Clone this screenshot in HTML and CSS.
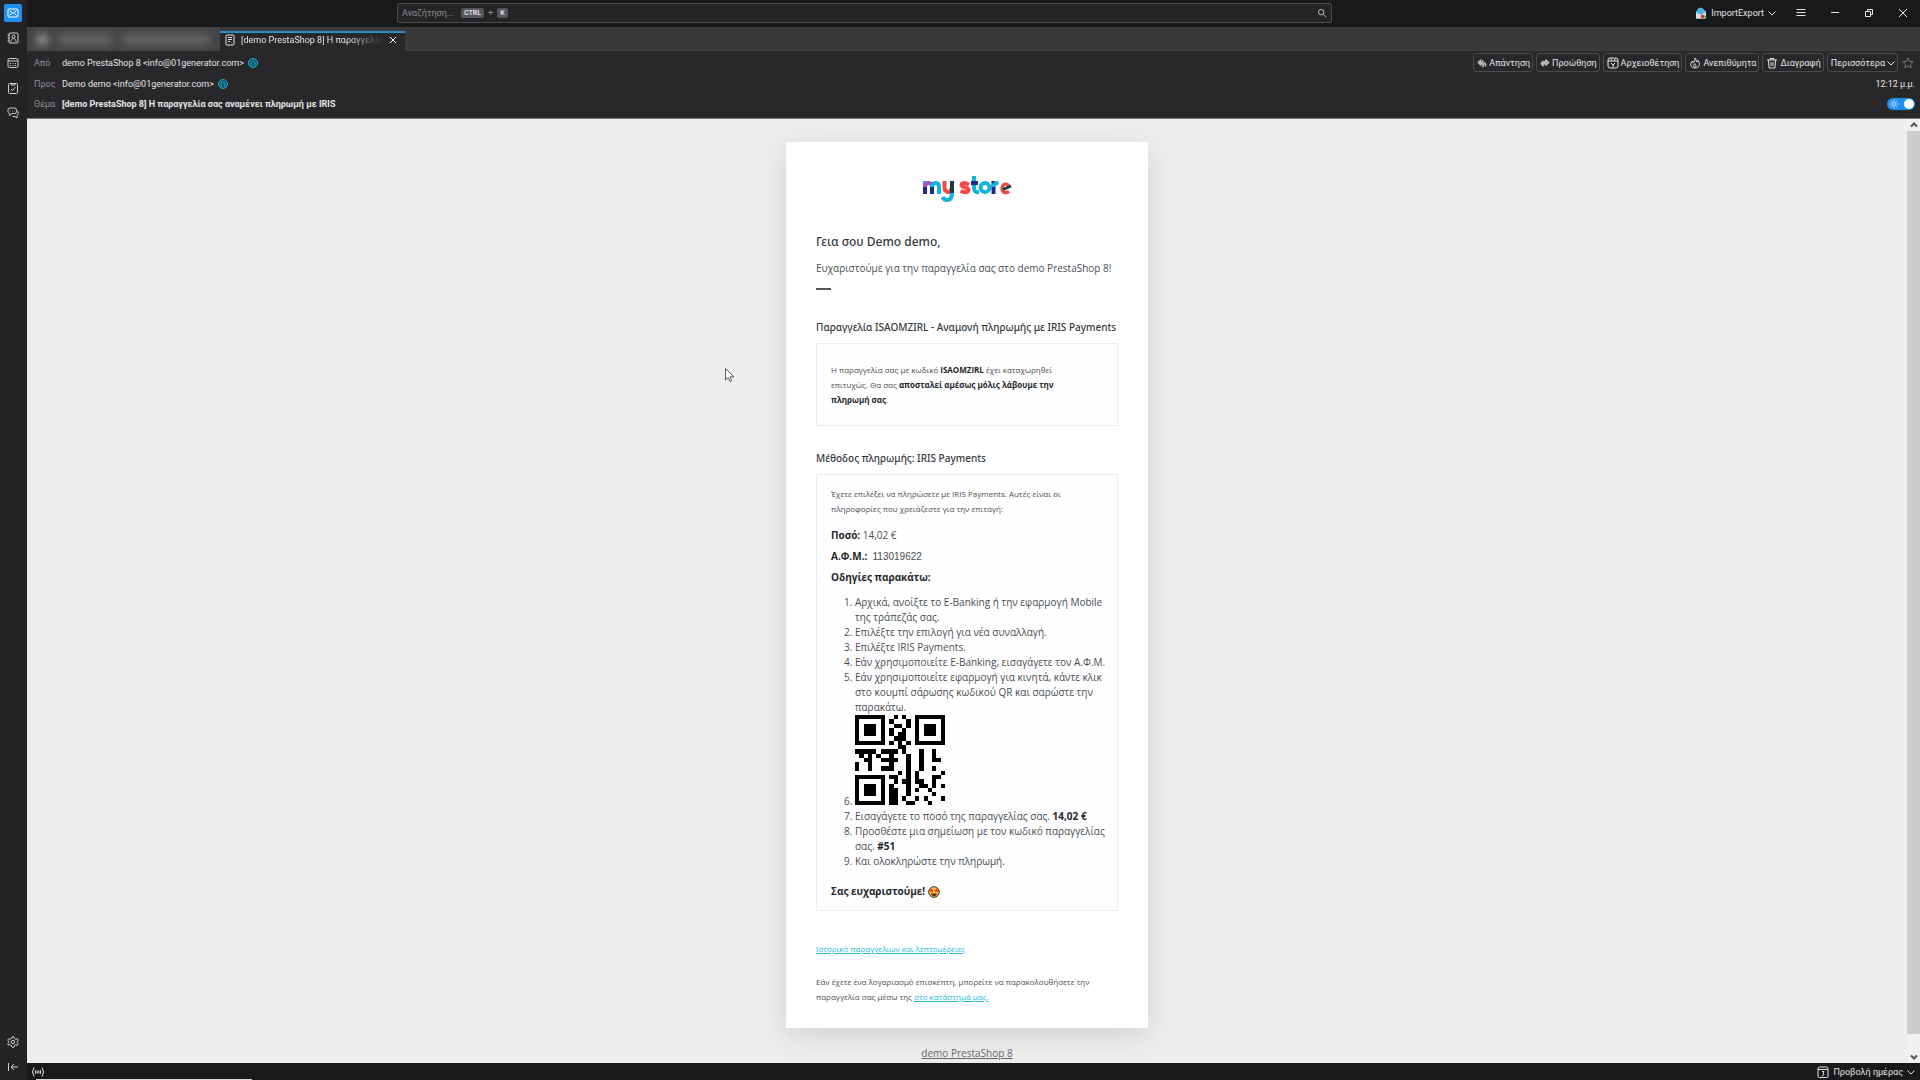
FILE: index.html
```html
<!DOCTYPE html>
<html lang="el">
<head>
<meta charset="utf-8">
<title>[demo PrestaShop 8] Η παραγγελία σας αναμένει πληρωμή με IRIS</title>
<link rel="stylesheet" href="styles.css">
</head>
<body>
<div class="app">
  <nav class="spaces" aria-label="Χώροι">
    <button class="space active" aria-label="Αλληλογραφία"><svg viewBox="0 0 12 12"><rect x="1" y="2" width="10" height="8" rx="1"/><path d="M2.500 3.500 6 6.500l3.500-3M2.500 8.500l2-2M9.500 8.500l-2-2"/></svg></button>
    <button class="space" aria-label="Επαφές"><svg viewBox="0 0 12 12"><rect x="2" y="1" width="9" height="10" rx="1"/><circle cx="6.500" cy="4.500" r="1.500"/><path d="M4 9.500c0-4 5-4 5 0M.500 3h2M.500 6h2M.500 9h2"/></svg></button>
    <button class="space" aria-label="Ημερολόγιο"><svg viewBox="0 0 12 12"><rect x="1" y="1.500" width="10" height="9" rx="1.500"/><path d="M1 4h10M3 6.500h1M5.500 6.500h1M8 6.500h1M3 8.500h1M5.500 8.500h1M8 8.500h1"/></svg></button>
    <button class="space" aria-label="Εργασίες"><svg viewBox="0 0 12 12"><rect x="1.500" y="1.500" width="9" height="10" rx="1"/><path d="M4 1.500h4v1.500H4zM4 7l1.500 1.500L8.500 5"/></svg></button>
    <button class="space" aria-label="Συνομιλία"><svg viewBox="0 0 12 12"><path d="M3 1h4.500a2 2 0 0 1 2 2v1.500a2 2 0 0 1-2 2H5L2.500 8.500v-2A2 2 0 0 1 1 4.500V3a2 2 0 0 1 2-2zM10.500 4c1 1 1 3.500-.500 4.500V11L8 9.500H5.500M3 4h.5M5 4h.5M7 4h.5"/></svg></button>
    <span class="spacer"></span>
    <button class="space" aria-label="Ρυθμίσεις"><svg viewBox="0 0 12 12"><path d="M5 .8h2l.4 1.700 1.200.7 1.700-.5 1 1.700L10 5.600v.8l1.300 1.200-1 1.700-1.700-.5-1.200.7L7 11.200H5l-.4-1.700-1.200-.7-1.700.5-1-1.700L2 6.400v-.8L.7 4.400l1-1.700 1.700.5 1.200-.7z"/><circle cx="6" cy="6" r="1.700"/></svg></button>
    <button class="space" aria-label="Σύμπτυξη"><svg viewBox="0 0 12 12"><path d="M1.500 2v8M11 6H4M7 3 4 6l3 3"/></svg></button>
  </nav>

  <header class="titlebar">
    <span></span>
    <label class="search">
      <input type="text" aria-label="Αναζήτηση" placeholder="Αναζήτηση...">
      <kbd>CTRL</kbd><span>+</span><kbd>K</kbd>
      <svg class="ico lens" viewBox="0 0 12 12"><circle cx="5" cy="5" r="3.300"/><path d="M7.500 7.500 11 11"/></svg>
    </label>
    <div class="window">
      <button class="addon">
        <svg viewBox="0 0 12 12"><path d="M1 4.500 6 .5l5 4v7H1z" fill="#9fb4c6"/><circle cx="5.500" cy="4" r="3.200" fill="#3cb6e8"/><path d="M1 5.500 6 8l5-2.500v6H1z" fill="#d9e2ea"/><circle cx="7.500" cy="9.500" r="1.800" fill="#d8272c"/><path d="M9 8l3 2-2 2z" fill="#2f9e57"/></svg>
        ImportExport
        <svg class="ico chev" viewBox="0 0 8 8"><path d="M.5 2.500 4 6l3.500-3.500"/></svg>
      </button>
      <button class="win" aria-label="Μενού"><svg class="ico" viewBox="0 0 10 10"><path d="M.5 1.500h9M.5 4.500h9M.5 7.500h9"/></svg></button>
      <button class="win" aria-label="Ελαχιστοποίηση"><svg class="ico" viewBox="0 0 10 10"><path d="M1 4.500h8"/></svg></button>
      <button class="win" aria-label="Επαναφορά"><svg class="ico" viewBox="0 0 10 10"><path d="M1.500 3.500h5v5h-5zM3.500 3.500v-2h5v5h-2"/></svg></button>
      <button class="win" aria-label="Κλείσιμο"><svg class="ico" viewBox="0 0 10 10"><path d="m1 1 8 8M9 1 1 9"/></svg></button>
    </div>
  </header>

  <div class="tabs">
    <button class="tab hidden-tab" aria-label="Εισερχόμενα"><i class="dot"></i><i class="bar"></i><i class="bar wide"></i></button>
    <div class="tab current">
      <svg class="ico" viewBox="0 0 10 12"><rect x="1" y="1" width="8" height="10" rx="1"/><path d="M3 3.500h4M3 5.500h4M3 7.500h2M6.500 8.500h.5"/></svg>
      <span class="tab-title">[demo PrestaShop 8] Η παραγγελία σας</span>
      <button class="close" aria-label="Κλείσιμο καρτέλας"><svg class="ico" viewBox="0 0 8 8"><path d="m1 1 6 6M7 1 1 7"/></svg></button>
    </div>
  </div>

  <section class="headers">
    <div class="row">
      <span class="name">Από</span><span>demo PrestaShop 8 &lt;info@01generator.com&gt;</span>
      <svg class="person" viewBox="0 0 10 10"><circle cx="5" cy="5" r="4.500"/><path d="M3 8.500c1-1 .5-1.500 0-2.500-.5-4 4.500-4 4 0-.5 1-1 1.500 0 2.500"/></svg>
      <div class="actions">
        <button><svg class="ico glyph" viewBox="0 0 12 12"><path d="M4.500 2 1 5.500 4.500 9V7c2.500 0 3 1.500 2.500 4 2-3 1-5.500-2.500-6z"/><path d="M7 2.500 6 3.500 8 5c3 1 3 3 2 5.500"/></svg>Απάντηση</button>
        <button><svg class="ico glyph" viewBox="0 0 12 12"><path d="M7 2 11 5.500 7 9V7C4.500 7 4 8 3.500 10 .5 6.500 3.500 4 7 4z"/><path d="M4 3.500C2 4 1 6 1.500 8"/></svg>Προώθηση</button>
        <button><svg class="ico" viewBox="0 0 12 12"><rect x="1" y="1" width="10" height="10" rx="2"/><path d="M1 4h10M4 1.500 4.500 4M8 1.500 7.500 4M4 6l2 2 2-2M6 8v2.500"/></svg>Αρχειοθέτηση</button>
        <button><svg class="ico" viewBox="0 0 12 12"><path d="M6 1c2 2 .5 3 2 4l1-1.500c3 4 1 7.500-3 7.500s-6-3.500-2.500-7l.5 2C5.500 5 6 3 6 1zM6 10.500c-2-1-1.500-3 0-4 0 1.500 2.500 2.500 0 4z"/></svg>Ανεπιθύμητα</button>
        <button><svg class="ico" viewBox="0 0 12 12"><path d="M1 3h10M4 3V1.500h4V3M2.500 3 3 11h6l.5-8M5 5v4M7 5v4"/></svg>Διαγραφή</button>
        <button>Περισσότερα<svg class="ico chev" viewBox="0 0 8 8"><path d="M.5 2.500 4 6l3.500-3.500"/></svg></button>
        <button class="star" aria-label="Αστέρι"><svg class="ico" viewBox="0 0 12 12"><path d="m6 1 1.500 3.300 3.600.4-2.700 2.400.8 3.600L6 8.900l-3.200 1.800.8-3.600L.9 4.700l3.600-.4z"/></svg></button>
      </div>
    </div>
    <div class="row">
      <span class="name">Προς</span><span>Demo demo &lt;info@01generator.com&gt;</span>
      <svg class="person" viewBox="0 0 10 10"><circle cx="5" cy="5" r="4.500"/><path d="M3 8.500c1-1 .5-1.500 0-2.500-.5-4 4.500-4 4 0-.5 1-1 1.500 0 2.500"/></svg>
      <time class="end">12:12 μ.μ.</time>
    </div>
    <div class="row">
      <span class="name">Θέμα</span><strong>[demo PrestaShop 8] Η παραγγελία σας αναμένει πληρωμή με IRIS</strong>
      <label class="switch end"><input type="checkbox" checked aria-label="Φωτεινή εμφάνιση"><svg viewBox="0 0 10 10"><circle cx="5" cy="5" r="1.800"/><path d="M5 .5v2M5 7.500v2M.5 5h2M7.500 5h2M1.800 1.800l1.400 1.400M6.800 6.800l1.400 1.400M8.200 1.800 6.800 3.200M3.200 6.800 1.800 8.200"/></svg></label>
    </div>
  </section>

  <main class="message">
    <div class="body">
      <article class="card">
        <svg class="logo" viewBox="0 0 90 28" role="img" aria-label="my store" fill="none" stroke-width="4" stroke-linecap="butt">
          <path d="M3 8v11M3 19v-6" stroke="#1e2a8a"/><path d="M3 11V6" stroke="#12b3dd"/>
          <path d="M3 12q0-4 3.500-4 3 0 3.500 3" stroke="#b04fb5"/><path d="M10 19v-7" stroke="#1e2a8a"/><path d="M10 12q0-4 3.500-4t3.500 4v7" stroke="#12b3dd"/>
          <path d="M22.500 6v6q0 5 4 5 3 0 3-4" stroke="#f0484b"/><path d="M30 6v12" stroke="#14413f"/><path d="M30 18q0 7-5 7-3 0-4.500-3" stroke="#12b3dd"/>
          <path d="M47 9.500q-7-3-7.500.5c0 3 7 2 7 5q-1 4-8 1" stroke="#f0484b"/>
          <path d="M52 1v12q0 5 5 4" stroke="#12b3dd"/><path d="M49 8h7" stroke="#1e2a8a"/>
          <circle cx="63" cy="12.500" r="4.500" stroke="#12b3dd"/>
          <path d="M71.500 6v13" stroke="#1e2a8a"/><path d="M71.500 12q0-4 5-4" stroke="#12b3dd"/>
          <path d="M87 16.500q-3 2-5.500.500-2.500-3-.5-6.500 3-3 6 .5" stroke="#f0484b" stroke-width="3.500"/><path d="m81 14.500 8-3.500" stroke="#14413f" stroke-width="3"/>
        </svg>
        <h1>Γεια σου Demo demo,</h1>
        <p class="lead">Ευχαριστούμε για την παραγγελία σας στο demo PrestaShop 8!</p>
        <hr class="dash">
        <h2>Παραγγελία ISAOMZIRL - Αναμονή πληρωμής με IRIS Payments</h2>
        <div class="box order">
          <p>Η παραγγελία σας με κωδικό <b>ISAOMZIRL</b> έχει καταχωρηθεί επιτυχώς. Θα σας <b>αποσταλεί αμέσως μόλις λάβουμε την πληρωμή σας</b>.</p>
        </div>
        <h2>Μέθοδος πληρωμής: IRIS Payments</h2>
        <div class="box payment">
          <p class="intro">Έχετε επιλέξει να πληρώσετε με IRIS Payments. Αυτές είναι οι πληροφορίες που χρειάζεστε για την επιταγή:</p>
          <p class="fact"><b>Ποσό:</b> 14,02 €</p>
          <p class="fact"><b>Α.Φ.Μ.:</b>&nbsp; <span class="vat">113019622</span></p>
          <p class="fact"><b>Οδηγίες παρακάτω:</b></p>
          <ol>
            <li>Αρχικά, ανοίξτε το E-Banking ή την εφαρμογή Mobile της τράπεζάς σας.</li>
            <li>Επιλέξτε την επιλογή για νέα συναλλαγή.</li>
            <li>Επιλέξτε IRIS Payments.</li>
            <li>Εάν χρησιμοποιείτε E-Banking, εισαγάγετε τον Α.Φ.Μ.</li>
            <li>Εάν χρησιμοποιείτε εφαρμογή για κινητά, κάντε κλικ στο κουμπί σάρωσης κωδικού QR και σαρώστε την παρακάτω.</li>
            <li><svg class="qr" viewBox="0 0 21 21" role="img" aria-label="Κωδικός QR">
              <path d="M0 0h7v7H0zM1 1v5h5V1zM14 0h7v7h-7zM15 1v5h5V1zM0 14h7v7H0zM1 15v5h5v-5zM2 2h3v3H2zM16 2h3v3h-3zM2 16h3v3H2z" fill-rule="evenodd"/>
              <path class="cells" d="M9 .5h1m1 0h1M8 1.500h1m3 0h1M9 2.500h2m1 0h1M8 3.500h1m2 0h1M8 4.500h1m1 0h2M9 5.500h3M8 6.500h1m1 0h1m1 0h1M10 7.500h2M0 8.500h5m1 0h4m1 0h1m3 0h1m2 0h1M1 9.500h1m1 0h1m1 0h1m2 0h1m3 0h1m2 0h1m2 0h1M2 10.500h2m2 0h4m2 0h1m2 0h1m2 0h2M0 11.500h1m2 0h1m4 0h1m3 0h1m2 0h1M0 12.500h1m2 0h1m2 0h3m3 0h1m2 0h1m2 0h1M10 13.500h1m1 0h1m1 0h1m5 0h1M8 14.500h2m2 0h1m1 0h1m3 0h2M9 15.500h1m1 0h2m1 0h2m2 0h1M8 16.500h1m3 0h1m2 0h2m1 0h1m1 0h1M8 17.500h2m2 0h1m1 0h1m2 0h1M8 18.500h2m2 0h1m5 0h1M8 19.500h2m1 0h1m2 0h1m1 0h1m3 0h1M8 20.500h2m2 0h2m3 0h1"/>
            </svg></li>
            <li>Εισαγάγετε το ποσό της παραγγελίας σας. <b>14,02 €</b></li>
            <li>Προσθέστε μια σημείωση με τον κωδικό παραγγελίας σας. <b>#51</b></li>
            <li>Και ολοκληρώστε την πληρωμή.</li>
          </ol>
          <p class="thanks"><b>Σας ευχαριστούμε!</b>
            <svg class="emoji" viewBox="0 0 12 12"><circle cx="6" cy="6" r="5.300" fill="#ffc83d" stroke="#3a2a1c"/><path d="m3.500 2 .8 1.500 1.700.2-1.200 1.200.3 1.700-1.600-.8-1.500.8.3-1.700L1 3.700l1.700-.2zM8.500 2l.8 1.500 1.700.2-1.200 1.200.3 1.700-1.600-.8-1.500.8.3-1.700L6 3.700l1.700-.2z" fill="#e5432d"/><path d="M3 7.500h6c-.5 3.500-5.500 3.500-6 0z" fill="#5b2b1a"/></svg>
          </p>
        </div>
        <p class="history"><a href="#history">Ιστορικό παραγγελιών και λεπτομέρειες</a></p>
        <p class="guest">Εάν έχετε ένα λογαριασμό επισκέπτη, μπορείτε να παρακολουθήσετε την παραγγελία σας μέσω της <a href="#store">στο κατάστημά μας.</a></p>
      </article>
      <a class="shop" href="#shop">demo PrestaShop 8</a>
    </div>
    <div class="scroll">
      <svg viewBox="0 0 8 8"><path d="M1 5.500 4 2.500l3 3"/></svg>
      <div class="thumb"></div>
      <svg viewBox="0 0 8 8"><path d="M1 2.500 4 5.500l3-3"/></svg>
    </div>
    <svg class="cursor" viewBox="0 0 10 15"><path d="M.5.5v11.500l2.700-2.500 1.800 4 1.800-.8L5 8.800h4z"/></svg>
  </main>

  <footer class="status">
    <svg class="ico net" viewBox="0 0 14 10"><circle cx="7" cy="5" r="1"/><path d="M5 3q-1.500 2 0 4M9 3q1.500 2 0 4M3 .5q-3 4.500 0 9M11 .5q3 4.500 0 9"/></svg>
    <button class="today"><svg class="ico cal" viewBox="0 0 12 12"><rect x="1" y="1" width="10" height="10.500" rx="1.500"/><path d="M1 3.500h10M5 5.500h2L6 7.200q2 .5 0 2.500H5"/></svg>Προβολή ημέρας<svg class="ico chev" viewBox="0 0 8 8"><path d="M.5 2.500 4 6l3.500-3.500"/></svg></button>
  </footer>
</div>
</body>
</html>
```
FILE: styles.css
```css
* { box-sizing: border-box; }
body { margin: 0; background: #18191b; color: #e4e4e6; font: 9px/14px Roboto, "Noto Sans", sans-serif; }
button { display: flex; align-items: center; margin: 0; padding: 0; border: 0; background: none; color: inherit; font: inherit; white-space: nowrap; }
svg { display: block; flex: none; }
p, h1, h2 { margin: 0; }

.app { display: grid; grid-template-columns: 27px 1fr; grid-template-rows: 27px 24px auto 1fr 17px; height: 100vh; overflow: hidden; }
.ico { width: 12px; height: 12px; fill: none; stroke: currentColor; }
.chev { width: 8px; height: 8px; }
.glyph { width: 10px; height: 10px; fill: #aaaaad; }

.spaces { grid-row: 1 / -1; display: flex; flex-direction: column; align-items: center; gap: 7px; padding: 4px 1px 4px 0; background: #242426; }
.space { justify-content: center; width: 18px; height: 18px; border-radius: 2px; color: #cfcfd1; }
.space svg { width: 12px; height: 12px; fill: none; stroke: currentColor; }
.space.active { background: #2190ee; color: #fff; }
.spacer { flex: 1; }

.titlebar { display: grid; grid-template-columns: 370fr 935fr 588fr; align-items: center; padding-bottom: 1px; background: #18191b; }
.search { display: flex; align-items: center; gap: 4px; height: 20px; padding: 0 4px; border: 1px solid #4c4c50; border-radius: 2px; background: #252528; color: #8c8c90; }
.search input { width: 55px; padding: 0; border: 0; outline: 0; background: none; color: inherit; font: inherit; }
.search input::placeholder { color: #8c8c90; }
kbd { padding: 0 3px; border-radius: 2px; background: #55555a; color: #e0e0e2; font: bold 7px/10px Roboto, sans-serif; }
.lens { width: 10px; height: 10px; margin-left: auto; color: #d8d8da; }
.window { display: flex; justify-content: flex-end; align-items: center; }
.addon { gap: 4px; margin-right: 8px; }
.addon svg:first-child { width: 12px; height: 12px; }
.win { justify-content: center; width: 34px; height: 26px; }
.win svg { width: 10px; height: 10px; }

.tabs { display: flex; background: #3a3a3c; }
.tab { display: flex; align-items: center; height: 24px; }
.hidden-tab { width: 193px; gap: 10px; padding: 0 10px; overflow: hidden; background: #444446; }
.hidden-tab i { height: 9px; background: #6a6a6c; filter: blur(4px); }
.hidden-tab .dot { width: 11px; height: 11px; border-radius: 50%; background: #a0a0a2; }
.hidden-tab .bar { width: 55px; }
.hidden-tab .wide { width: 90px; }
.current { width: 185px; margin-top: 4px; height: 20px; padding: 0 8px 4px 5px; gap: 6px; border-top: 2px solid #2a8fd4; background: #28282a; }
.current > svg { width: 10px; }
.tab-title { flex: 1; overflow: hidden; white-space: nowrap; mask-image: linear-gradient(to right, #000 75%, transparent); }
.close svg { width: 8px; height: 8px; color: #fff; }

.headers { display: grid; grid-template-rows: 21px 21px 19px; padding: 1px 5px 5px 7px; border-bottom: 1px solid #77777a; background: #28282a; }
.row { display: flex; align-items: center; }
.name { width: 28px; color: #8f8f93; }
.person { width: 10px; height: 10px; margin-left: 4px; fill: #0c5566; stroke: #20b4cf; }
.end, .actions { margin-left: auto; }
.actions { display: flex; gap: 3px; }
.actions button { gap: 2px; height: 19px; padding: 0 2px 0 3px; border: 1px solid #4a4a4d; border-radius: 3px; }
.actions .star { border-color: transparent; color: #77777a; padding: 0; }
.switch { display: flex; align-items: center; position: relative; }
.switch input { display: flex; align-items: center; justify-content: flex-end; appearance: none; width: 28px; height: 12px; margin: 0; padding: 1px; border-radius: 6px; background: #2190ee; }
.switch input::before { content: ""; width: 10px; height: 10px; border-radius: 50%; background: #fff; }
.switch svg { position: absolute; left: 2px; width: 10px; height: 10px; fill: none; stroke: #bfe0fb; }

.message { position: relative; display: flex; min-height: 0; background: #eee; }
.body { flex: 1; min-width: 0; overflow: hidden; padding-top: 23px; text-align: center; font: 10px/15px "Open Sans", "Noto Sans", sans-serif; }
.card { width: 362px; margin: 0 auto; padding: 33px 30px 24px; background: #fff; box-shadow: 0 8px 30px rgba(0, 0, 0, .12); color: #4a4f55; text-align: left; }
.logo { width: 90px; height: 28px; margin: 0 auto 28px; }
b { color: #25282c; }
h1 { padding-top: 1px; color: #363a41; font: 500 12px/20px "Noto Sans", sans-serif; }
.lead { margin-top: 9px; }
.dash { width: 15px; height: 2px; margin: 12px 0 27px; border: 0; background: #54585e; }
h2 { color: #363a41; font: 500 10px/20px "Noto Sans", sans-serif; white-space: nowrap; }
.box { margin: 6px 0 22px; padding: 18px 8px 18px 14px; border: 1px solid #ececec; background: #fefefe; }
.order { padding-right: 36px; }
.order, .intro, .history, .guest { font-size: 8px; }
.payment { margin-bottom: 30px; padding-top: 11px; padding-bottom: 11px; }
.intro { margin-bottom: 12px; }
.fact { margin-bottom: 6px; }
.vat { font-family: "Liberation Sans", sans-serif; }
ol { margin: 10px 0 15px; padding-left: 24px; }
.qr { display: inline-block; width: 90px; height: 90px; vertical-align: baseline; fill: #000; shape-rendering: crispEdges; }
.cells { stroke: #000; }
.thanks { display: flex; align-items: center; gap: 3px; }
.emoji { width: 12px; height: 12px; }
.guest { margin-top: 18px; }
.card a { color: #25b9d7; }
.shop { display: inline-block; margin-top: 18px; color: #65686c; }

.scroll { display: flex; flex-direction: column; align-items: center; width: 13px; background: #f0f0f0; }
.scroll svg { width: 8px; height: 12px; fill: none; stroke: #505050; stroke-width: 2; }
.thumb { flex: 1; width: 13px; margin-bottom: 17px; background: #cdcdcd; }
.cursor { position: absolute; left: 698px; top: 249px; width: 10px; height: 15px; fill: #fff; stroke: #555; }

.status { position: relative; display: flex; align-items: center; justify-content: space-between; padding: 0 5px 0 4px; background: #18191b; }
.status::after { content: ""; position: absolute; left: 9px; bottom: 0; width: 216px; height: 1px; background: #d8d8d8; }
.net { width: 14px; height: 10px; }
.today { gap: 4px; }
```
